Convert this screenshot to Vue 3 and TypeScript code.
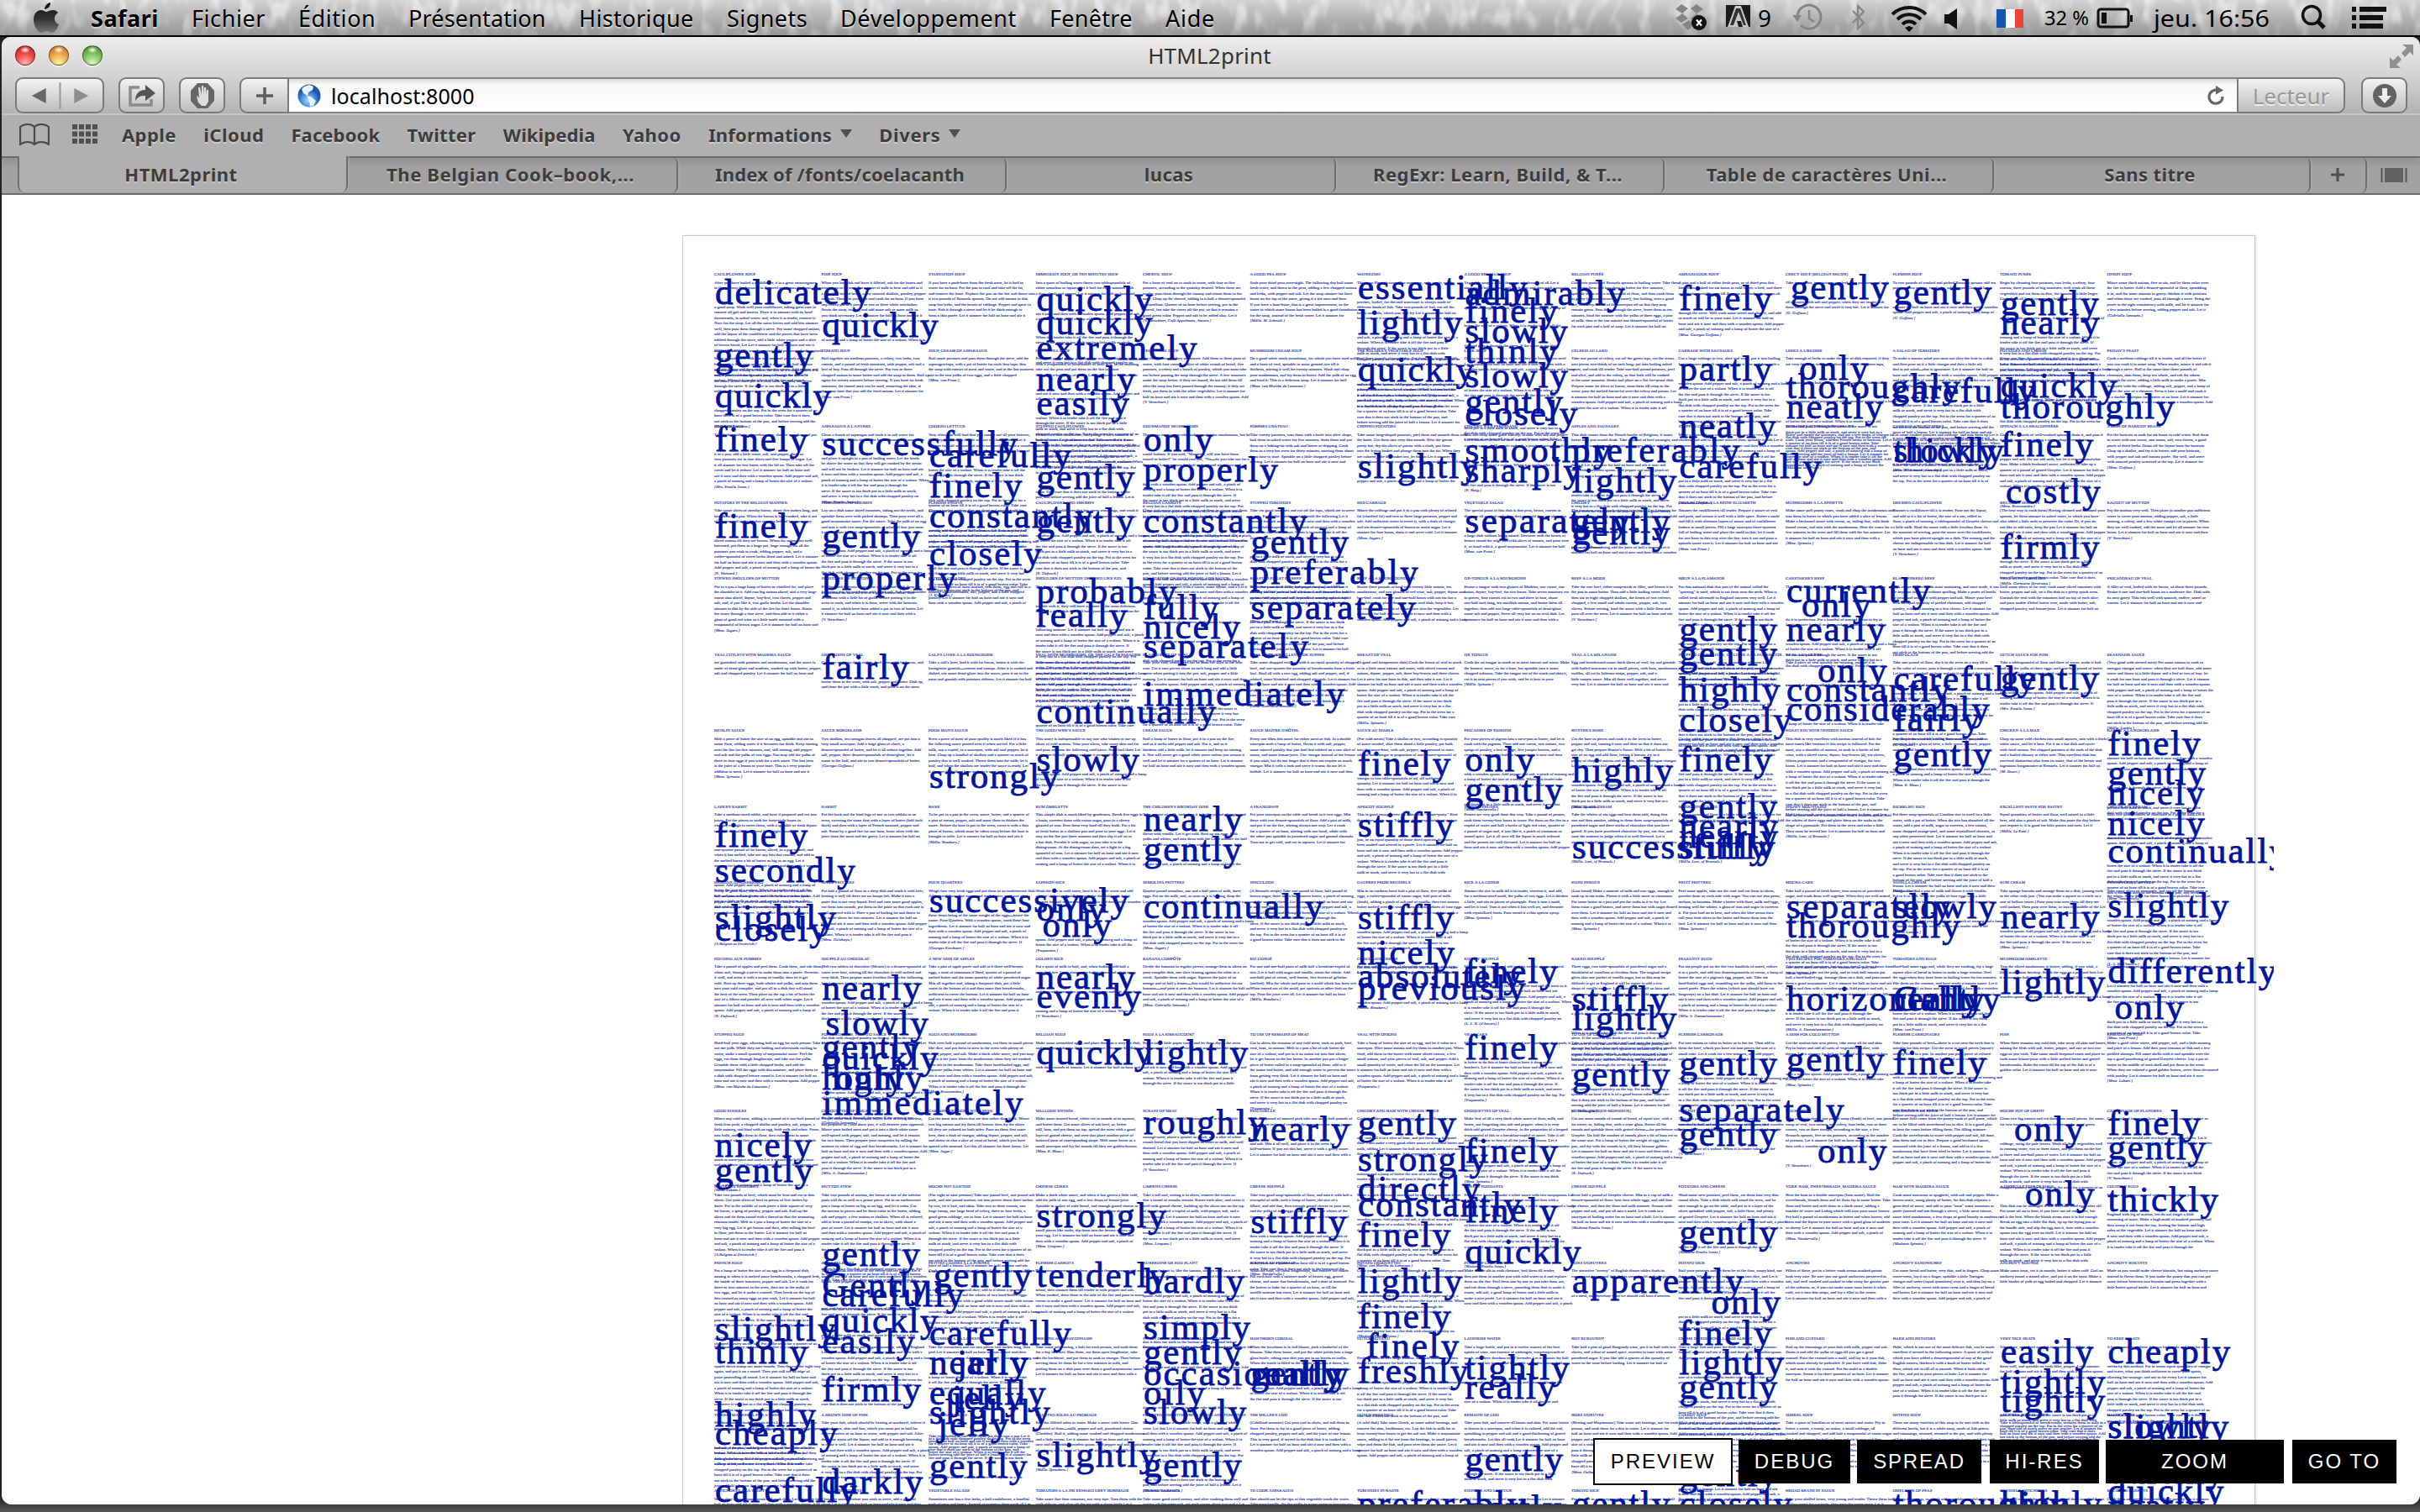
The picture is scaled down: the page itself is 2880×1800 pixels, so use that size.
<script setup lang="ts">
import type { Directive } from 'vue'

interface Adverb { word: string; x: number; y: number; track: number }
interface Line { text: string; gap: number; sign: boolean }
interface Recipe { title: string; lines: Line[] }

const PITCH_X = 127.5
const PITCH_Y = 90.5
const LEADING = 6.53

/* Spreads a label over a given width by adjusting its tracking. */
const vFit: Directive<HTMLElement, number> = {
  mounted(el, binding) {
    const n = (el.textContent ?? '').trim().length
    el.style.letterSpacing = `${(binding.value - el.offsetWidth) / n}px`
  },
}

/* Adverbs per column: word, baseline, optional indent. */
const adverbColumns: string[] = [
  'delicately 361,gently 436,quickly 484,finely 536,finely 639,finely 1007,secondly 1049,slightly 1105,closely 1119,nicely 1376,gently 1406,slightly 1595,thinly 1622,highly 1697,cheaply 1719,carefully 1787',
  'quickly 400,successfully 541,gently 651,properly 701,fairly 807,nearly 1189,slowly 1231 4,gently 1259,quickly 1272,highly 1296,only 1296 15,immediately 1326,gently 1506,Gently 1543,carefully 1554,quickly 1585,easily 1610,firmly 1667,darkly 1777',
  'carefully 555,finely 591,constantly 627,closely 672,strongly 937,successively 1085,gently 1531 5,carefully 1600,nearly 1635,jelly 1635 33,equally 1671,jelly 1677 27,slightly 1694,jelly 1708 10,gently 1758',
  'quickly 369,quickly 397,extremely 427,nearly 464,easily 493,gently 581,gently 633,probably 717,really 745,continually 860,slowly 917,only 1095,only 1114 7,nearly 1176,evenly 1199,quickly 1266,strongly 1460,tenderly 1531,slightly 1745',
  'only 536,properly 572,constantly 633,fully 736,nicely 759,separately 782,immediately 839,nearly 988,gently 1024,continually 1092,lightly 1266,roughly 1349,hardly 1538,simply 1593,gently 1623,occasionally 1648,oily 1671,slowly 1694,gently 1757',
  'gently 658,preferably 694,separately 736,nearly 1357,stiffly 1467,gently 1648,really 1648',
  'essentially 355,lightly 397,quickly 453,slightly 568,finely 922,stiffly 995,stiffly 1105,nicely 1147,absolutely 1175,previously 1189,gently 1350,strongly 1393,directly 1428,constantly 1447,finely 1483,lightly 1538,finely 1580,finely 1615 10,freshly 1645,preferably 1803',
  'admirably 362,finely 383,slowly 407,thinly 431,slowly 460,gently 491,closely 505,smoothly 549,sharply 573,separately 633,only 917,gently 953,finely 1169,finely 1260,finely 1383,finely 1454,quickly 1503,tightly 1641,really 1664,gently 1750,partly 1808 4',
  'preferably 549,lightly 585,gently 633,gently 647,highly 930,successfully 1021,stiffly 1202,lightly 1225,gently 1292,apparently 1538,gently 1803',
  'finely 368,partly 452,neatly 520,carefully 568,gently 762,gently 791,highly 834,closely 870,finely 917,gently 973,nearly 996,nearly 1008,stiffly 1021,gently 1279,separately 1334,gently 1363,gently 1480,only 1563 38,finely 1600,lightly 1635,gently 1664,gently 1768,closely 1803',
  'gently 355 5,only 451 15,thoroughly 473,neatly 497,currently 716,only 733 18,nearly 762,only 811 37,constantly 834,considerably 857,separately 1092,thoroughly 1115,horizontally 1202,gently 1274,only 1383 37',
  'gently 361,carefully 478,slowly 549,thickly 549,carefully 821,fairly 869,gently 911,slowly 1092,Gently 1202,really 1202,finely 1278,thoroughly 1803',
  'gently 374,nearly 397,quickly 472,thoroughly 497,finely 542,costly 598 6,firmly 664,gently 820,nearly 1104,lightly 1182,only 1357 16,only 1434 29,easily 1622,tightly 1658,tightly 1680,highly 1803',
  'finely 898,gently 933,nicely 957,nicely 993,continually 1026,slightly 1091,differently 1169,only 1212 8,finely 1350,gently 1379,thickly 1441,cheaply 1622,slightly 1711,slowly 1711,quickly 1765,quickly 1788,neatly 1806',
]

/* Tracking of the words that set wider or tighter than the rest. */
const tracking: Record<string, number> = {
  quickly: 1.5, slowly: 1.5, gently: 1.8, slightly: 2.1, preferably: 2.5, apparently: 2.5,
  separately: 2.4, immediately: 2.4, extremely: 2.4, strongly: 1.9,
}

const adverbs: Adverb[] = adverbColumns.flatMap((column, c) =>
  column.split(',').map((entry) => {
    const [word, y, indent] = entry.split(' ')
    return { word, x: 850 + c * PITCH_X + Number(indent ?? 0), y: Number(y), track: tracking[word] ?? 2 }
  }),
)

/* Recipes row by row: title | depth in lines | opening | contributor. */
const book = `
CAULIFLOWER SOUP|18|After you have boiled a cauliflower, it is a great extravagance to throw away the liquor; it is flavored and forms the basis of a good soup. Wash well your cauliflower, taking great care to remove all grit and insects. Place it to simmer with its head downwards, in salted water; and, when it is tender, remove it. Now for the soup. Let all the outer leaves and odd bits simmer well, then pass them through a sieve. Fry some chopped onions, add the liquor of the cauliflower and the pieces that have been rubbed through the sieve, add a little white pepper and a slice of brown bread. Let|
FISH SOUP|11|When you buy fish and have it filleted, ask for the bones and trimmings to be sent. Put a quart of milk to heat and add to it a bunch of mixed herbs, a few minced shallots, parsley, pepper and salt. Throw in your fish and cook for an hour. If you have any celery put in a piece, or two or three white artichokes. Strain the soup, taste it, and add more salt or more milk as you think necessary.|
STARVATION SOUP|6|If you have a pork-bone from the fresh meat, let it boil in water for an hour. Put the pan to cool and take off the fat, and remove the bone. Replace the pan on the fire and throw into it two pounds of Brussels sprouts. Do not add onions to this soup but leeks, and the hearts of cabbage. Pepper and spice to taste. Rub it through a sieve and let it be thick enough to form a thin purée.|
IMMEDIATE SOUP, OR TEN MINUTES SOUP|15|Into a quart of boiling water throw two tablespoonfuls of either semolina or tapioca; let it boil for eight minutes with a dust of salt and pepper.|
CHERVIL SOUP|7|Put a bone of veal on to cook in water, with four or five potatoes, according to the quantity desired. When these are tender, pass them through the tammy and return them to the soup. Chop up the chervil, adding to it half a dessert-spoonful of cornflour. Quarter of an hour before serving, put in the chervil, but take the cover off the pot, so that it remains a good green color. Pepper and salt to be added also.|[V. Verachtert, Café Appelmans, Anvers.]
A GOOD PEA SOUP|7|Soak your dried peas over-night. The following day boil some fresh water, and throw in the peas, adding a few chopped onions and leeks, with pepper and salt. Let the soup simmer for three hours on the top of the stove, giving it a stir now and then. If you have a ham-bone, that is a great improvement, or the water in which some bacon has been boiled is a good foundation for the soup, instead of the fresh water.|[Mdlle. M. Schmidt.]
WATERZOEI|23|This is an Flemish soup. One uses carp, eels, tench, roach, perches, barbel, for the real waterzoei is always made of different kinds of fish. Take two pounds of fish, cut off the heads and tails, which you will fry|
A GOOD BELGIAN SOUP|14|Vegetable soup is called the most wholesome of all|
BELGIAN PURÉE|8|Cook two pounds of Brussels sprouts in boiling water. Take them out, drain them and toss them in butter for five minutes, sprinkle them with a teaspoonful of flour, and then cook them in gravy (or meat extract and water), fast boiling, over a good fire, and keep the lid of the saucepan off so that they may remain green. Pass them through the sieve, leave them in ten minutes, bind the mixture with the yolks of three eggs, a pint of milk; then at the last minute one dessert-spoonful of butter for each pint and a half of soup.|
AMBASSADOR SOUP|10|A pint and a half of either fresh peas, or of dried peas that have been soaked for six hours in cold water; a leek, and three onions chopped. Simmer till the peas are tender, then pass all through the sieve. Well wash some sorrel and chop it, and add as much as will be to your taste.|[Mme. Georges Goffaux.]
CRECY SOUP (BELGIAN RECIPE)|6|Take ten carrots, two onions, one leek, five potatoes, and cook all in water, with salt and pepper; when they are tender, rub them through the sieve and serve it very hot.|[G. Goffaux.]
FLEMISH SOUP|7|To two pounds of washed and picked Brussels sprouts add ten potatoes, two onions, two leeks, salt, pepper. Cook all|[G. Goffaux.]
TOMATO PURÉE|23|Begin by cleaning four potatoes, two leeks, a celery, four carrots, three pounds of big tomatoes; well wash all these vegetables and cut them in dice, the tomatoes a little larger. Cook them all|
ONION SOUP|6|Mince some thick onions, five or six, and let them color over the fire in butter. Add a dessert-spoonful of flour, sprinkling it in, and the same amount in gravy; thicken it with potatoes and when these are cooked, pass all through a sieve. Bring the purée to the right consistency with milk, and let it simmer for a few minutes before serving, adding pepper and salt.|[Gabrielle Janssens.]
POTAGE LEMAN|13|Make a good stock with one and one-half pounds of skirt of beef, with a leek, two onions|[Gabrielle Janssens.]
TOMATO SOUP|7|Boil together six medium potatoes, a celery, two leeks, two carrots, and a pound of fresh tomatoes, with pepper, salt and a leaf of bay. Pass all through the sieve. Fry two or three chopped onions in some butter and add the soup to them. Boil up again for twenty minutes before serving. If you have no fresh tomatoes, the tinned ones can be used, removing the skin, at the same time that you add the fried onions.|[Mme. van Praet.]
SOUP, CREAM OF ASPARAGUS|4|Boil some potatoes and pass them through the sieve, add the asparagus-tops, with a pat of butter for each four tops; thin the soup with extract of meat and water, and at the last moment stir in the raw yolks of two eggs, and a little chopped parsley.|[Mme. van Praet.]
GREEN PEA SOUP|20|Put half a pound of dry green peas to soak overnight in water, with a teaspoonful of bicarbonate of soda in it. In the morning take out the peas and put them on the fire in about three-and-a-half pints of water.|
VEGETABLE SOUP|8|Fry four onions till they are brown. Add them to three pints of water, with four carrots, a slice of white crumb of bread, five potatoes, a celery and a bunch of parsley, which you must take out before passing the soup through the sieve. A few tomatoes make the soup better; if they are tinned, do not add them till after the soup has been passed through the tammy; if they are fresh, put them in with the other vegetables.|[V. Verachtert.]
MUSHROOM CREAM SOUP|5|On a good white stock foundation, for which you have used milk and a bone of veal, sprinkle in some ground rice till it thickens, stirring it well for twenty minutes. Wash and chop your mushrooms, and fry them in butter. Add the yolk of an egg and bind it. This is a delicious soup.|[Mme. van Marcke de Lunessen.]
THE SOLDIER'S VEGETABLE SOUP|12|Peel three pounds of vegetables. Put them in a large pot with all the|
LEEK SOUP|15|Cut up two onions and fry them till they are brown; you need|
CELERIS AU LARD|9|Take one pound of celery, cut off the green tops, cut the stems into pieces two-thirds of an inch long; put into boiling salted water, and cook till tender. Take one-half pound potatoes, peel and slice, and add to the celery, so that both will be cooked at the same moment. Strain and place on a flat fire-proof dish. Prepare some fat slices of bacon, toast them till crisp in the oven; pour the melted bacon-fat over the celery and potato.|
CABBAGE WITH SAUSAGES|14|Cut a large cabbage in two, slice and wash, put it into boiling|
LEEKS À LIEGOISE|20|Take enough of leeks to make the size of dish required; if they are very thick cut in two lengthwise. Cut off the green tops,|
A SALAD OF TOMATOES|22|To make a tomato salad you must not slice the fruit in a dish and then pour on it a little vinegar and then a little oil; that is not salad—that is ignorance.|
POTATOES AND CHEESE|12|Every one likes this nourishing dish, and it is a cheap one.|
FRIDAY'S FEAST|8|Cook a medium cabbage till it is tender, and all the better if you can cook it in some soup. When tender, mince it and rub it through a sieve. Boil at the same time three pounds of chestnuts, skin them, keep ten whole, and rub the others through the sieve, adding a little milk to make a purée. Mix the purée with the cabbage, adding salt, pepper, and a lump of butter the size of a chestnut. Press it into a mold and cook it in a double saucepan for quarter of an hour.|
RED CABBAGE|10|Take half a cabbage of medium size, chop it very fine and put it in a pan; add a little water, salt, and pepper, three or four potatoes cut in fine slices and five lumps of sugar. Let it all simmer for two hours with the lid on. Then take off the cover and let it reduce.|[Mrs. Emelie Jones.]
ASPARAGUS À L'ANVERS|12|Clean a bunch of asparagus and cook it in salt water for fifteen minutes. To do this tie the bunch round with some tape and place it upright in a pan of boiling water. Let the heads be above the water so that they will get cooked by the steam and will not be broken.|[Mme. Emelie Jones.]
COOKED LETTUCE|21|Very often you will find that you cannot use all your lettuces, that they have begun to bolt and are too hard. This is|
STUFFED CAULIFLOWER|12|Pick over a fine cauliflower, and plunge it for a moment in boiling water.|
GOURMANDS' MUSHROOMS|20|There was once a man who had a passion for mushrooms, but he could fashion. If you said, "Monsieur, will you have them tossed in butter?" he would roar out, "No—do you take me for a Prussian?|
POMMES CHÂTEAU|5|Take twenty potatoes, turn them with a knife into olive shape, boil them in salted water for five minutes; drain them and put them on a baking-tin with salt and butter or dripping. Cook them in a very hot oven for thirty minutes, moving them about from time to time. Sprinkle on a little chopped parsley before serving.|
CHIPPED POTATOES|9|Take some long-shaped potatoes, peel them and smooth them with the knife. Cut them into very thin rounds. Heat the grease pretty hot, dry the slices of potato with a cloth, put them into the frying basket and plunge them into the fat. When they are colored, take the basket out, let the fat|
CHICORY À LA FERDINAND|10|Boil and chop some good chicory; season with salt and pepper|[E. Haig.]
APPLES AND SAUSAGES|22|This dish comes from the French border of Belgium; it tastes better than you would think. Take a pound of beef sausages, and preferably use the small chipolata sausages. (What a delightful thing if|
STUFFED CHICORY|13|Make a mince of any cold white meat, such as veal, pork or chicken, and add to it some minced ham; sprinkle it with|[Madame Limpens.]
TOMATOES STUFFED WITH BEANS|6|Halve and empty the tomatoes, and put a few drops of vinegar in each. Cook your beans, whether French beans or haricots.|[Madame van Praet.]
CABBAGE AND POTATOES|7|Cut some cooked potatoes and cabbage, and mix them up|[Mlle. M. Schmidt, Antwerp.]
SPINACH À LA BRACONNIÈRE|13|Cook two pounds of well-washed spinach; drain it, and pass it through a sieve; or, failing a sieve, chop it very butter, pepper and salt. Do not add milk, but let it remain somewhat firm. Make a thick bechamel sauce, sufficient to take up a quarter of a pound of grated Gruyère.|[Mme. Braconnière.]
A DISH OF HARICOT BEANS|6|Put the haricots to soak for six hours in cold water. Boil them in water with one carrot, one onion, salt, two cloves, a good pinch of dried herbs. Drain off the liquor from the haricots. Chop up a shallot, and fry it in butter; add your haricots, with pepper and salt and tomato purée. Stir well, and serve with minced parsley scattered at the top.|[Mme. Goffaux.]
POTATOES IN THE BELGIAN MANNER|12|Take some slices of streaky bacon, about five inches long, and heat them in a pan. When the bacon is half-cooked, take it out of the pan and in the fat that remains behind fry some very sliced onions till they are brown. When the onions are well browned, put them in a large pot, large enough for all the potatoes you wish to cook, adding pepper, salt, and a coffee-spoonful of sweet herbs dried and mixed.|[E. Wainard.]
TOMATOES AND SHRIMPS|15|Lay on a dish some sliced tomatoes, taking out the seeds, and sprinkle them over with picked shrimps. Then pour over all a good mayonnaise sauce. For the sauce: Take the yolk of an egg and mix it with two soup-spoonfuls of salad oil that you must|
FLEMISH ENDIVE|16|Choose twelve endives that are short and neat; cut off the outside leaves and pare the bottom; wash them in plenty of water|[J. Kirckaert.]
CAULIFLOWER AND SHRIMPS|12|Pick a good cauliflower that has green trimmings, and wash it|[E. Defouck.]
BELGIAN CARROTS|14|Clean and scrape your carrots and cut them in pieces; put them in a pan with butter|
STUFFED TOMATOES|20|Take ten good tomatoes and cut off the tops, which are to serve as lids. Empty the insides, and fill with the following|[Mme. van Praet.]
RED CABBAGE|5|Mince the cabbage and put it in a pan with plenty of refined fat (clarified fat) and two or three large potatoes, pepper and salt. Add sufficient water to cover it, with a dash of vinegar and six dessert-spoonfuls of brown or moist sugar. Let it simmer for four hours, drain it and serve cold.|[Mme. Segers.]
VEGETABLE SALAD|8|The special point of this dish is that peas, beans, carrots in dice, are all cooked and when they are cold they are placed in a large dish without being mixed. Decorate with the hearts of lettuce round the edge and with slices of tomato, and pour over it, or hand with it, a good mayonnaise.|[Mme. van Praet.]
CHICORY|7|The common way to cook chicory is to boil it|[Mme. van Praet.]
CAULIFLOWER À LA REINE ELIZABETH|7|Simmer the cauliflowers till tender. Prepare a mince of veal and pork, and season it well with a little spice. Butter a mold and fill it with alternate layers of mince and of cauliflower broken in small pieces. Fill a large saucepan three-quarters full of boiling water and place the mold in this; let it cook for one hour in this way over the fire; turn it out and pour a spinach sauce over it.|[Mme. van Praet.]
MUSHROOMS À LA SPINETTE|6|Make some puff pastry cases, wash and chop the mushrooms and toss them in butter to which you have added a slice of lemon. Make a bechamel sauce with cream, or, failing that, with thick tinned cream, and mix with the mushrooms. Heat the cases for a few minutes in the oven and fill them with the hot mixture.|[Mme. Spinette.]
DRESSED CAULIFLOWER|8|Simmer a cauliflower till it is tender. Pour out the liquor, and add to it a bit of butter, the size of a nut, rolled in flour, a pinch of nutmeg, a tablespoonful of Gruyère cheese and a little milk. Bind the sauce with a little feculina flour. At the moment of serving, pour the sauce over the cauliflower, which you have placed upright on a dish. The nutmeg and the cheese are indispensable to this dish.|[V. Verachtert.]
BRUSSELS SPROUTS|13|(The best way to cook them) Having cleaned and trimmed your sprouts, let them simmer in salted water, to which you have also added a little soda to preserve the color. Or, if you do not like to add soda, keep the pan|[Mdlle. Germaine Verstraete.]
RAGOUT OF MUTTON|5|Fry the mutton very well. Then place in another pan sufficient water to cover your mutton, adding pepper, salt, a little nutmeg, a celery, and a few white turnips cut in pieces. When they are well cooked, add the meat and let all simmer for two hours.|[V. Verachtert.]
STEWED SHOULDER OF MUTTON|8|Put in a pan a large lump of butter or clarified fat, and place the shoulder in it. Add two big onions sliced, and a very large carrot also sliced, thyme, bay-leaf, two cloves, pepper and salt, and, if you like it, two garlic knobs. Let the shoulder simmer in this by the side of the fire for three hours. Strain the sauce through a fine sieve, and then add to it either a glass of good red wine or a little made mustard with a teaspoonful of brown sugar.|[Mme. Segers.]
SHOULDER OF MUTTON|6|Put the dried haricots to soak for a night, and cook them the following day for two hours with some salt. Rub your shoulder of mutton with a little bit of garlic before putting it in the oven to cook, and when it is done, serve with the haricots round it, to which have been added a pat or two of butter.|[V. Verachtert.]
MUTTON COLLOPS|3|Take some slices of roast mutton, trim them, egg and roll in a mixture of breadcrumbs, salt, pepper, and a little chopped parsley.|
SHOULDER OF MUTTON DRESSED LIKE KID|26|The flavor of kid dressed as here. Let them therefore take trouble with it, they will have a dinner of the most delicious. Put into a deep dish that will hold your shoulder of mutton the following mixture:|
ROAST RUMP OF BEEF, BORDELAISE SAUCE|14|Braise the rump of beef with a carrot, some thyme, and a|
ROASTED FILLET OF BEEF|13|Take four pounds of fillet, and pepper and salt it well|[Mme. van Praet.]
BEEF À LA BOURGUIGNONNE|6|Braise three pounds of beef with twenty little onions, ten mushrooms, and two glasses of red wine, salt, pepper, thyme and bay-leaf; cook for one and one-half hours with not too hot a fire. After that, place the meat on an oval dish; keep it hot; cut two tablespoonfuls of demi-glaze into the vegetables.|
OX-TONGUE À LA BOURGEOISE|6|Braise a tongue with two glasses of Madeira, one carrot, one onion, thyme, bay-leaf, for two hours. Take seven tomatoes cut in pieces, four carrots cut in two and three in four, about one-half inch long, ten smallish onions, and braise them all together; then add two large table-spoonfuls of demi-glaze, some salt and pepper. Serve all very hot on an oval dish.|
BEEF À LA MODE|6|Take the raw beef, either rump-steak or fillet, and brown it in the pan in some butter. Then add a little boiling water. Add then six or eight chopped shallots, the hearts of two celeries chopped, a few small and whole carrots, pepper, salt, two cloves. Before serving, bind the sauce with a little flour and pour all over the meat.|[V. Verachtert.]
BŒUF À LA FLAMANDE|21|For this national dish that part of the animal called the "spiering" is used, which is cut from near the neck. What is called fresh silverside in England answers very well.|
CARETAKER'S BEEF|20|This nourishing dish is of the Maître de la Cie, held that can do it to perfection. Put a handful of minced onion to fry in|
BLANKENBERG BEEF|12|This recipe makes a dish most sustaining, and once made, it can be kept hot for hours without spoiling. Make a purée of lentils or peas, and season it with pepper and salt. Mince your beef with an equal quantity of peeled chestnuts, add chopped parsley, a dust of nutmeg or a few cloves.|
VEAL WITH TOMATOES|4|Grill some slices of fat veal; cook some sliced tomatoes with butter, pepper and salt, on a flat dish in a pretty quick oven. Garnish the veal with the tomatoes laid on top of each slice, and pour maître d'hôtel butter over, made with butter, salt, chopped parsley, and lemon-juice.|
FRICANDEAU OF VEAL|3|A fillet of veal, larded with fat bacon, of about three pounds. Braise it one and one-half hours on a moderate fire. Dish with its own gravy. This eats well with spinach, endive, sorrel or carrots.|
VEAL CUTLETS WITH MADEIRA SAUCE|2|are garnished with potatoes and mushrooms, and the sauce is made of demi-glaze and madeira, worked up with butter, pepper, salt and chopped parsley.|
GRENADINS OF VEAL|5|Cut your veal into thick cutlets, lard them with fat bacon, and braise them in the oven, with salt, pepper and butter. Dish up, and rinse the pot with a little stock, and pour it on the meat ready to serve.|
CALF'S LIVER À LA BOURGEOISE|3|Take a calf's liver, lard it with fat bacon, braise it with the bourgeoise garnish—carrots and turnips. After it is cooked and dished, stir some demi-glaze into the sauce, pour it on to the meat and garnish with potatoes château.|
VEAL WITH MUSHROOMS, OR THE CALF IN PARADISE|7|Take some slices of loin of veal, fry them in butter, with|
BLANQUETTE OF VEAL|11|Take your veal, which need not be from the fillet or the best cuts. Cut it into pieces about an inch long and add a little water when putting it into the pot; salt, pepper and a little nutmeg.|
VEAL CAKE, EXCELLENT FOR SUPPER|8|Take some chopped veal and with it an equal quantity of chopped beef, and one-quarter the quantity of breadcrumbs from a fresh loaf. Bind all with a raw egg, adding salt and pepper, and, if wished, some blanched and chopped almonds.|[Mme. Gabrielle Janssens.]
BREAST OF VEAL|11|(A good and inexpensive dish) Cook the breast of veal in stock or in a little meat extract and water, with sliced carrots and onions, thyme, pepper, salt, three bay-leaves and three cloves. Let it stew for one hour in this, and then take it out.|[Mdlle. Spinette.]
OX TONGUE|4|Cook the ox tongue in stock or in meat extract and water. Make the hunters' sauce, as for a hare, but sprinkle into it some chopped sultanas. Take the tongue out of the stock and skin it, cut it in neat pieces if you wish, and let it heat in your sauce.|[Mdlle. Spinette.]
VEAL À LA MILANAISE|4|Egg and breadcrumb some thick slices of veal; fry and garnish with boiled macaroni cut in small pieces, with ham, mushrooms, truffles, all cut in Julienne strips, pepper, salt, and a little tomato sauce. Mix all these well together, and serve very hot.|
STUFFED CALF'S LIVER, OR LIVER À LA PANIER D'OR|18|Take the liver of a calf, using a good pint of warm|
VEAL À LA CRÈME|11|Take a piece of veal suitable for roasting, and put it in vinegar|
DEMI-GLAZE|15|Take one pound of flour, dry it in the oven on a tray till it is the color of cocoa; pass it through a sieve into a saucepan,|[G. Goffaux.]
DUTCH SAUCE FOR FISH|9|Take a tablespoonful of flour and three of water; make it boil and add the yolks of three eggs; melt one-half pound of butter and beat it|[Mrs. Emelie Jones.]
BEARNAISE SAUCE|12|(Very good with stewed meat) Put some onions to cook in tarragon vinegar and water; when they are half done, add more water and throw in a little thyme and a leaf or two of bay; let it cook for one hour and pass it through a sieve.|[Mdlle. Leonie.]
MUSLIN SAUCE|7|Melt a piece of butter the size of an egg, sprinkle and stir in some flour, adding water if it becomes too thick. Keep stirring over the fire for five minutes, and, still stirring, add pepper and salt and the yolks of two eggs. You may add the yolks of three or four eggs if you wish for a rich sauce. The last item is the juice of a lemon to your taste. This is a very popular addition to meat.|[Mme. Spinette.]
SAUCE BORDELAISE|5|Two shallots, ten tarragon leaves all chopped, are put into a very small saucepan. Add a large glass of claret, a dessert-spoonful of butter, and let it all reduce together. Add salt, pepper, three dessert-spoonfuls of demi-glaze, let it come to the boil, and stir in two dessert-spoonfuls of butter.|[Georges Goffaux.]
POOR MAN'S SAUCE|9|Even a piece of meat of poor quality is much liked if it has the following sauce poured over it when served. Put a little milk, say a cupful, in a saucepan, with salt and pepper; let it heat. Chop up a handful of shallots and a quarter as much of parsley that is well washed. Throw them into the milk; let it boil, and when the shallots are tender the sauce is ready.|
THE GOOD WIFE'S SAUCE|9|This sauce is indispensable to any one who wishes to use up slices of cold mutton. Trim your slices, take away skin and fat and pour on them the following cold sauce. Hard boil three|
CREAM SAUCE|5|Roll a lump of butter in flour, put it in a pan on the fire, and as it melts add pepper and salt. Stir it, and as it thickens add a little milk; let it simmer and keep on stirring it. You will never get a good white sauce unless you season it well and let it simmer for a quarter of an hour.|
SAUCE MAÎTRE D'HÔTEL|6|Every one likes this sauce for either meat or fish. In a double saucepan melt a lump of butter, flavor it with salt, pepper, some minced parsley that you had first rubbed on a raw slice of onion, and some lemon-juice. Use vinegar instead of the lemon if you wish, but do not forget that it does not require so much vinegar. Mix it with a fork and serve it warm; do not let it bubble.|
SAUCE AU DIABLE|10|(For cold meats) Take a shallot or two, according to quantity of sauce needed, slice them shred a little parsley, put both into the sauce-boat, with salt, pepper, and mustard to taste; add oil and vinegar in proportion of one dessert-spoonful of vinegar to two table-spoonfuls of oil, till sufficient quantity.|
FRICASSEE OF PIGEONS|13|Put your pieces of pigeon into a stew-pan in butter, and let it cook with the pigeons. Then add one carrot, two onions, two sprigs of parsley, a leaf of sage, five juniper berries, and a very|[Mme. Vandervalle.]
HUNTER'S HARE|13|Cut the hare in pieces and cook it in the oven in butter, pepper and salt, turning it now and then so that it does not get dry. Then prepare Hunter's Sauce. Melt a bit of butter the size of an egg and add flour, letting it brown; fry in it plenty of chopped onions and shallots, adding tarragon vinegar.|[Mme. Spinette.]
FLEMISH RABBIT|22|Cut the rabbit into neat pieces. Put them in a deep|[Mdlle. Lust, of Brussels.]
ROAST KID WITH VENISON SAUCE|14|This dish is very excellent with mutton instead of kid; the meat tastes like venison if this recipe is followed: Put the meat, say a shoulder of mutton, to soak in a bottle of red wine, with a sliced carrot, thyme, bay-leaves (4), six cloves, fifteen peppercorns and a teaspoonful of vinegar, for two hours.|
BAKED RABBIT|9|Fry the pieces of rabbit, adding three onions, ten medium potatoes, half a glass of beer, a little water or stock, pepper and salt, and let all cook|[Mme. E. Maes.]
CHICKEN À LA MAX|6|Chop up some cold chicken into small squares, mix with a thick white sauce, and let it heat. Put it on a hot dish and cover with fried onions. Put chipped potatoes at the ends of the dish and a boiled chicory at either side. This excellent dish has received distinction also from its name, that of the heroic and ingenious burgomaster of Brussels.|[M. Stuart.]
RABBIT À LA BORDELAISE|18|Cut a rabbit into six and cover with vinegar; chop|
LAEKEN RABBIT|17|Take a medium-sized rabbit, and have it prepared and cut into joints. Put the pieces to soak for forty-eight hours in vinegar, enough to cover them, with a sprinkle of fresh thyme in it and a small onion sliced forty-eight hours, put one-quarter pound of fat bacon, sliced, in a pan to melt, and when it has melted, take out any bits that remain, and add to the melted bacon a bit of butter as big as an egg.|
RABBIT|4|Put the back and the hind legs of one or two rabbits in an oven, covering the same first with a layer of butter (half inch thick) and then with a layer of French mustard, pepper and salt. Roast by a good fire for one hour, baste often with the juice from the meat and the gravy.|
HARE|5|To be put in a pan in the oven; sauce, butter, and a quarter of a pint of cream, pepper, salt and some flour to thicken the sauce. Before the hare is put in the oven, cover it with a thin piece of bacon, which must be taken away before the hare is brought to table.|[Mdlle. Breukers.]
RUM OMELETTE|9|This simple dish is much liked by gentlemen. Break five eggs in a basin, sweeten them with castor sugar, pour in a sherry glassful of rum. Beat them very hard till they froth. Put a bit of fresh butter in a shallow pan and pour in your eggs. Let it stay on the fire just three minutes and then slip it off on to a hot dish. Powder it with sugar, as you take it to the dining-room. At the dining-room door, set a light to a big spoonful of rum.|
THE CHILDREN'S BIRTHDAY DISH|9|Take a quart of milk, and when it is half a pound of sugar, and flavor with vanilla. Let it get cold. Beat up six eggs, both yolks and whites, and mix them with the|
A FRANGIPANI|5|Put your saucepan on the table and break in it two eggs. Mix these with two dessert-spoonfuls of flour. Add a pint of milk, and put it on the fire, stirring always one way. Let it cook for a quarter of an hour, stirring with one hand, while with the other you sprinkle in powdered sugar and ground almonds. Turn out to get cold, and cut in squares.|
APRICOT SOUFFLÉ|11|This is good enough even for a birthday "dinner-party." Beat the whites of six eggs Take four dessert-spoonfuls of apricot jam, or an equal quantity of those dried apricots that have been soaked and stewed to a purée.|
STEWED PRUNES|6|Prunes are very good done this way. Take a pound of prunes, soak them twenty-four hours in water. Put them on the fire in a cupful of water and half a bottle of light red wine, quarter of a pound of sugar and, if you like it, a pinch of cinnamon or mixed spice. Let it all stew till the liquor is much reduced and the prunes are well flavored.|
CHOCOLATE CREAM|9|Take the whites of six eggs and beat them stiff, doing first one and then another, adding to them three soup-spoonfuls of powdered sugar and three sticks of chocolate that you have grated. If you have powdered chocolate by you, use that, and taste the mixture to judge when it is well flavored.|[Mdlle. Lust, of Brussels.]
MADELEINE CAKES|8|Put two pounds of flour in a basin with a bit|[Mdlle. Lust, of Brussels.]
SNOWY MOUNTAINS|4|Mold into rounds castor sugar and mix; put in them, and beat the whites of three eggs and place them on the rusks in the shape of a pyramide. Put them in the oven and color a little. They must be served hot.|[Mdlle. Lust, of Brussels.]
RICHELIEU RICE|14|Put three soup-spoonfuls of Carolina rice to swell in a little water, with a pat of butter. When the rice has absorbed all the water, add a pint of milk, sugar to sweeten, a few raisins, some chopped orange-peel, and some crystallized cherries, or any other preserved fruit.|[Mdlle. Lust.]
EXCELLENT PASTE FOR PASTRY|3|Equal quantities of butter and flour, well mixed in a little beer, add also a pinch of salt. Make this paste the day before you require it; it is good for little patties and tarts.|[Mdlle. Le Kent.]
CHOCOLATE CREAM|15|Melt five penny tablets of chocolate in a pint of milk|[Mme. Vandervalle.]
BELGIAN GINGERBREAD|10|A cup of good flour, six ounces of lard or|[A Belgian at Droitwich.]
APPLE FRITTERS|9|Put half a pound of flour in a deep dish and work it with beer, beating it well till there are no lumps left. Make it into a paste that is not very liquid. Peel and core some good apples, cut them into rounds, put them in the paste so that each one is well covered with it. Have a pan of boiling fat and throw in the apple slices for two minutes.|[Mme. Delahaye.]
FOUR QUARTERS|11|Weigh four very fresh eggs and put them in an earthenware dish. Add sieved flour, fine sugar, and fresh butter, each one of these items being of the same weight of the eggs—hence the name: Four Quarters. With a wooden spoon, work these four ingredients.|[Georges Kerckaert.]
SAFFRON RICE|11|Wash the rice in cold water, heat it in a little water and add a bit of saffron and milk (enough for the dish) with|[Paquerette.]
SEMOLINA FRITTERS|11|Quarter pound semolina, one and a half pints of milk, three eggs. Put on the milk, and, as soon as it is boiling, drop the|[Mme. Segers.]
SPECULOOS|9|(A Brussels recipe) Take one pound of flour, half pound of brown sugar, three and a half ounces butter, a pinch of nutmeg, and the same of cloves.|
GAUFRES FROM BRUSSELS|15|Mix in an earthern bowl half a pint of flour, five yolks of eggs, a coffee-spoonful of castor sugar, half pint of milk (fresh), adding a pinch of salt and of vanilla; then two ounces butter melted over hot water. Then beat the whites of four eggs|
RICE À LA CONDE|5|Simmer the rice in milk till it is tender, sweeten it, and add, for a medium-sized mold, the yolks of two eggs. Let it thicken a little, and stir in pieces of pineapple. Pour it into a mold, and let it cool. Turn it out when it has well set, and decorate with crystallized fruits. Pour round it a thin apricot syrup.|[Mme. Spinette.]
PAINS PERDUS|7|(Lost bread) Make a mixture of milk and raw eggs, enough to soak up in six rusks. Flavor it with a little mace or cinnamon. Put some butter in a pan and put the rusks in it to fry. Let them color a good brown, and serve them hot with sugar dusted over them.|[Mme. Spinette.]
FRUIT FRITTERS|7|Peel some apples, take out the core and cut them in slices, powder them on each side with sugar. You can use also pears, melons, or bananas. Make a batter with flour, milk and eggs, beating well the whites; a glass of rum and sugar to sweeten it. Put your lard on to heat, and when the blue steam rises roll your fruit slices in the batter and throw them into the lard.|[Mme. Spinette.]
MOCHA CAKE|15|Take half a pound of fresh butter, four ounces of powdered sugar, and work them well together. When they are well mixed,|[Mme. Spinette.]
VANILLA CREAM|8|Bring to the boil a pint of milk and flavor it with vanilla. Put to it to boil. Whip the yolks of four eggs with a little|[Mdlle. Lenelle.]
RUM CREAM|10|Take sponge biscuits and arrange them on a dish, joining each to the other with jam. (You can make a square or a circle or a sort of hollow tower.) Pour your rum over them till they are well soaked. Then pour over them, or into the middle of the|[Mme. Spinette.]
PINEAPPLE À L'ANVERS|13|Take some slices of pineapple, and cut off the brown spots at the edges. Steep them for three hours in a plateful of weak|[L. L. B. d'Anvers.]
POUDING AUX POMMES|9|Take a pound of apples and peel them. Cook them, and rub them, when soft, through a sieve to make them into a purée. Sweeten it well, and scent it with a scrap of vanilla; then let it get cold. Beat up three eggs, both whites and yolks, and mix them into your cold compôte, and put all in a dish that will stand the heat of the oven. Then place on the top a bit of butter the size of a filbert and powder all over with white sugar.|[E. Defouck.]
SOUFFLÉ AU CHOCOLAT|21|Melt two tablets of chocolate (Menier) in a dessert-spoonful of water over heat, stirring till the chocolate is well melted and very thick. Then prepare some feculina flour in the following|
A NEW DISH OF APPLES|8|Take a pint of apple purée and add to it three well-beaten eggs, a taste of cinnamon if liked, quarter of a pound of melted butter and the same quantity of white powdered sugar. Mix all together and, taking a fireproof dish, put a little water in the bottom of it and then some fine breadcrumbs, sufficient to cover the bottom.|
GOLDEN RICE|9|Put a quart of milk to boil, and, when boiling, add half a pound of rice.|[V. Verachtert.]
BANANA COMPÔTE|7|Divide the bananas in regular pieces; arrange them in slices on your compôte dish, one slice leaning against the other in a circle. Sprinkle them with sugar. Squeeze the juice of an orange and of half a lemon—this would be sufficient for six bananas—and pour it over the bananas.|[Mme. Gabrielle Janssens.]
RIZ CONDÉ|6|For one and one-half pints of milk half a breakfast-cupful of rice. Let it boil with sugar and vanilla; strain the whole. Add one-half pint of cream, well beaten, five leaves of gelatine (melted). Mix the whole and pour in a mold which has been wet. When turned out of the mold, put apricots or other fruit on the top. Pour the juice over all.|[Mdlle. Breukers.]
CHOCOLATE CREAM|8|For one and a half pints of chocolate cream, milk, four eggs|[Mdlle. Breukers.]
KIDNEY SOUFFLÉ|11|Mince a veal kidney, and add to it its weight of minced veal. Make a brown sauce of flour and butter and add the meat to it. Let it cool a little.|[L. L. B. (d'Anvers).]
BAKED SOUFFLÉ|17|Three eggs, two table-spoonfuls of powdered sugar and a thimbleful of cornflour or feculina flour. The original recipe gives also one packet of vanilla sugar, but as this may be difficult to get in England it will be easier to add a few drops of vanilla essence.|
PEASANTS' EGGS|9|For six people put on the fire two handfuls of sorrel, reduce it to a purée, and add two dessertspoonfuls of cream, a lump of butter the size of a pigeon's egg, pepper, salt. Take six hard-boiled eggs and, crumbling out the yolks, add them to the sorrel purée. Place the whites (which you should have cut longways) on a hot dish.|[Mlle. A. Demeulemeester.]
TWO RECIPES FOR TOMATOES AND EGGS|12|Take some good tomatoes, but not too ripe. Cut them down from top to bottom, take out the pulp, and in each half tomato put half a hard-boiled egg. Arrange them on a dish, and pour round them a good mayonnaise.|[Mdlle. A. Demeulemeester.]
TOMATOES AND EGGS|12|Hard-boil some eggs and, while they are cooking, fry a large square slice of bread in butter to make a large crouton. Peel the eggs when they have been in boiling water for ten minutes. Pile them on the crouton, and have ready a tomato sauce.|[Mme. van Praet.]
MUSHROOM OMELETTE|6|Toss the sliced mushrooms in butter, adding, if you wish, a little mushroom ketchup. Break the eggs in a pan and beat|
ASPARAGUS OMELETTE|13|Cook the asparagus-tops in salt and water and drain them. Roll|[Mme. van Praet.]
STUFFED EGGS|8|Hard-boil your eggs, allowing half an egg for each person. Take out the yolk. While they are boiling and afterwards cooling in water, make a small quantity of mayonnaise sauce. Peel the eggs, cut them through lengthways, and take out the yolks. Crumble these with a little chopped herbs, and add the mayonnaise. Fill the eggs with this mixture, and place them in a dish with chopped lettuce round it.|[Mme. van Marcke de Lunessen.]
POACHED EGGS, TOMATO SAUCE|15|Make your tomato sauce. Break the eggs into boiling water|[Gabrielle Janssens.]
EGGS AND MUSHROOMS|9|Pick over half a pound of mushrooms, cut them in small pieces like dice, and put them to stew in the oven with plenty of butter, pepper, and salt. Make a thick white sauce, and you may add to it the juice from the mushrooms when they are cooked; then stir in the mushrooms. Take three hard-boiled eggs, and separate yolks from whites.|[Mme. Braconnière.]
BELGIAN EGGS|5|Make some scrambled eggs, and place them on a very hot dish, and pour round them a thick tomato sauce. Decorate the dish with thick rounds of tomato.|
EGGS À LA RIBEAUCOURT|8|Butter some little paper cases, and let them dry in the oven. Put a morsel of butter in each|
TO USE UP REMAINS OF MEAT|12|Cut in slices the remains of any cold meat, such as pork, beef, veal, ham, or mutton. Melt in a pan a bit of salt butter the size of a walnut, and put in it an onion cut into fine slices; let it get brown in the hot butter. In another pan put a larger piece of butter rolled in a soup-spoonful of flour; add to it the onion and butter, and add enough water to prevent the sauce from getting very thick.|[Paquerette.]
VEAL WITH ONIONS|8|Take a lump of butter the size of an egg, and let it color in a saucepan. Slice some onions and fry them in another pan. When fried, add them to the butter with some sliced carrots, a few small onions, and your pieces of veal, salt, and pepper. Add a small quantity of water, and close the lid on the saucepan.|[Paquerette.]
VEAL CAKE|11|Mince very pounds of raw veal and one-fourth pound of pork; it is better to do this at home than to have it done at the butcher's.|[Paquerette.]
TO USE UP COLD MEAT|13|Take a fresh cabbage, scald it well and open the leaves|[L. Verhaeghe.]
FLEMISH CARBONADE|16|Put two onions to color in butter or in hot fat. Then add to them the beef, which you have cut into pieces the size of a small cake. Let it cook for a few minutes, and add pepper, salt,|
A DISH FOR COLD MUTTON|8|Cut the mutton into neat pieces, take away all fat and skin. Fry in butter and add all sorts of vegetables in dice, with thyme,|[Mme. Spinette.]
FLEMISH CARBONADES|13|Take four pounds of beef—there is a cut near the neck that is suitable for this recipe. Cut the meat in small pieces (square) and fry them in a pan. In another pan put a piece of refined fat|
FISH|5|When there remains any cold fish, take away all skin and bones, mixing the flesh with salt, butter, pepper, and one or two raw eggs as you wish. Take some small fireproof cases and place in each some lemon-juice with a little melted butter and grated breadcrumbs. Bake the cases till the top of the fish is of a golden color.|
REMAINS OF FISH|7|Make a good white sauce, add pepper, salt, and a little nutmeg and juice of a lemon. Add then your remains of fish and a few pickled shrimps. Fill some shells with it and sprinkle over the top a good powdering of grated Gruyère cheese. Lay a pat of butter in the middle of each shell and put them in the oven. When they are colored a good golden brown, serve them decorated with parsley.|[Mme. Lekent.]
GOOD RISSOLES|13|Mince any cold meat, adding to a pound of it one-half pound of fresh lean pork, a chopped shallot and parsley, salt, pepper, a little nutmeg, and bind with an egg, both yolk and white. Form into balls, and dip them in flour, then color them in some butter, and when they are browned pour into the butter a little stock or meat-juice and water|[Mme. Lekens.]
CROQUETTES OF BOILED MEAT|10|People rather look down upon boiled meat as being tasteless, but prepared as I will show you, it will deserve your approval. Mince your boiled meat and put it into a thick white sauce well-spiced with pepper, salt, and nutmeg, and let it remain for two hours. Then prepare your croquettes by rolling the mixture in white of egg and fine breadcrumbs.|[Mlle. A. Demeulemeester.]
CARBONADES DONE WITH BEER|6|Cut the meat into slices that are thin rather than thick. Mince two big onions and fry them till brown; then fry the slices till they are colored on both sides. Pour on them first some beer, then a dash of vinegar, adding thyme, pepper, and salt, and throw in also a slice of crust of bread, which you have spread with mustard. Let this all simmer for three hours.|[Mme. Segur.]
WALLOON ENTRÉE|6|Make some toasted bread, either cut in rounds or in squares, and butter them. Cut some slices of salt beef, or, better still, ham, and put them on top; spread the meat with a good layer of grated cheese, and over that place another piece of buttered toast of corresponding shape. Melt some butter in a small saucepan and fry the rounds till they are golden-brown.|[Mme. E. Maes.]
SCRAPS OF MEAT|9|The scraps of meat should be minced; add to them a little sausage-meat, about a quarter as much, and a slice of white crumb bread that you have dipped in water or milk, and well drained.|[V. Verachtert.]
FRICADELLE|7|To half a pound of minced pork take one and a half pounds of veal, cut an inch, and crumble them up; two raw eggs, pepper and salt. Mix it all well, and place it in the oven for half-an-hour. If you eat this hot, serve it with a gravy sauce.|
CHICORY AND HAM WITH CHEESE SAUCE|11|Cook the chicory in butter till they are done. Then take each one, and roll it in a slice of ham, and put them in a fireproof dish. Then make a very good white sauce of flour and butter and milk, adding|
CROQUETTES OF VEAL|12|Make first of all a very thick white sauce of flour, milk, and butter, not forgetting also salt and pepper; when it is very thick add grated Gruyère cheese, in the proportion of a heaped teaspoonful of this to a breakfast-cupful of sauce. Take it off the fire, and stir in first of all the juice of a lemon.|[Mme. Spinette.]
ENTRÉE (CROQUE-MONSIEUR)|10|Cut out some rounds of crumb of bread, of equal size, with a tin cutter; or, failing that, with a wine glass. Butter all the rounds and sprinkle them with grated cheese—for preference with Gruyère. On half the number of rounds place a bit of ham cut to the same size. Put a lump of butter the weight of egg into a pan, and fry with the rounds in it, till they become golden.|[E. Defouck.]
HOT POT|7|Take two pounds of lean beef and put into cold water|[V. Verachtert.]
HOCHE POT|9|Take one pig's cheek, one pound rump (flank) of beef, one pound rump of veal, two onions, one celery, four leeks, two or three carrots, two or three turnips, according to the size, a few Brussels sprouts, five or six potatoes, according to the number of persons.|[V. Verachtert.]
BOUCHÉES À LA REINE|8|Get some little cases from the pastry-cook of puff paste, which are to be filled with sweetbread cut in dice. It is a good plan to heat the cases before filling them. The filling mixture: Cook the sweetbreads in water with pepper and salt, till done, skin them and cut in dice. Prepare a good bechamel sauce, seasoned with the juice of a lemon, and add to it a few mushrooms that have been fried in butter.|
HOCHE POT OF GHENT|15|Clean two big carrots and cut them into small pieces, the same for two turnips, four leeks, two celeries and a good green cabbage, using the pale leaves. Wash all these vegetables well in running water, two or three times, and put them on the fire in three and one-half pints of water.|[Georges Kerckaert.]
CARBONADE OF FLANDERS|11|Cut your beef into neat slices. Mince some onions for five or six people you would add two bay-leaves, two cloves,|[V. Verachtert.]
HEADLESS SPARROWS|11|Take two pounds of beef, which must be lean and cut in thin slices. Cut your slices of beef in pieces of five inches by three. Put in the middle of each piece a little square of very fat bacon, a sprig of parsley, pepper and salt. Roll up the slices and tie them round with a thread so that the seasoning remains inside. Melt in a pan a lump of butter the size of a very big egg. Let it get brown and then, after rolling the beef in flour, put them in the butter.|[A Belgian at Droitwich.]
MUTTON STEW|21|Take two pounds of mutton, the breast or one of the inferior parts will do as well as a prime piece. Put in an earthenware pan a lump of butter as big as an egg, and let it color. Cut the mutton in pieces and let them color in the butter, adding salt and pepper, a few onions or shallots. When all is colored, add at least a pound of turnips, cut in slices, with about a pint of water.|
HOCHE POT GANTOIS|15|(For eight or nine persons) Take one pound beef, one pound salt pork, and one pound mutton; cut into pieces about three inches by two, let it boil, and skim. Take two or three carrots, one large turnip, one large head of celery, three or four leeks, a good green cabbage, cut in four.|
CHINESE CORKS|10|Make a thick white sauce, and when it has grown a little cold, add the yolk of one egg, and a few drops of lemon-juice. Sprinkle in a slice of stale bread, and enough grated cheese to flavor it and leave it to cool for two hours. Then shape into small pieces like corks, dip them into the beaten whites of your egg.|[Mme. Limpens.]
LIMPENS CHEESE|9|Take a roll and, cutting it in slices, remove the crusts so that a round of crumbs remain. Butter each slice, and cover it well with grated cheese, building up the slices one on the top of the other. Boil a cupful of milk, with pepper, salt, and a little nutmeg.|[Mme. Limpens.]
CHEESE SOUFFLÉ|15|Take two good soup-spoonfuls of flour, and mix it with half a teacupful of milk; melt a lump of butter, the size of a filbert, and add that, then enough grated cheese to your taste, and the yolks of four eggs. Add at the last the whites of the four eggs,|[Mme. Vandervalle.]
CHEESE CROQUETTES|13|Make a thick bechamel sauce, and be sure that you cook it|[Mme. van Marcke de Lunessen.]
CHEESE FONDANTS|13|For twelve fondants make a white sauce with two soupspoons|[Madame Emelie Jones.]
CHEESE SOUFFLÉ|6|Grate half a pound of Gruyère cheese. Mix in a cup of milk a dessert-spoonful of flour; beat four whole eggs, and add first the cheese, and then the flour and milk mixture. Season with pepper and salt, and put all into a mold. Let it cook in a saucepan of boiling water for an hour and a half.|[Madame Emelie Jones.]
POTATOES AND CHEESE|11|Wash some new potatoes, peel them, cut them into very thin round slices. Take a dish which will stand the oven, and be nice enough to go on the table, and put in it a layer of the slices sprinkled with pepper, salt, a little flour, and plenty of grated Gruyère.|[Madame Emelie Jones.]
YORK HAM, SWEETBREADS, MADEIRA SAUCE|8|Heat the ham in a double saucepan (bain marie). Boil the sweetbreads, blanch them and let them fry in some butter. Take flour and butter and melt them to a thick sauce, adding a tumbler of water and Liebig which will turn your sauce brown. Fry half a pound of mushrooms in butter and when brown, add them and the liquor to your sauce with a good glass of madeira or sherry.|[Mme. Vandervalle.]
HAM WITH MADEIRA SAUCE|9|Cook some macaroni or spaghetti, with salt and pepper. Make a brown sauce, using plenty of butter, for this dish requires a great deal of sauce, and add to your "roux" some tomatoes in purée (stewed and run through a sieve), a little meat extract, some fried mushrooms, a few drops of good brandy or madeira to your taste.|[Madame Spinette.]
A DIFFICULT DISH OF EGGS|13|This dish can be managed if one will take fried eggs after all! Put some oil on to heat; if you have not oil use butter, but oil is the best. When the bluish steam rises it is hot enough. Break an egg into a little flat dish, tip up the frying pan at the handle side, and slip the egg into it, then with a wooden spoon turn the egg over on itself.|
COUNTRY EGGS|10|Make a white sauce mixed with onions, such as you would eat in England with leg of mutton, but do not forget a little seasoning of mace. Make a high mold of mashed potatoes, and then scoop it out from the top, leaving the bottom and high sides of the vegetable.|
FRENCH EGGS|13|Put a lump of butter the size of an egg in a fireproof dish, mixing in when it is melted some breadcrumbs, a chopped leek, the inside of three tomatoes, pepper and salt. Let it cook for three or four minutes in the oven, then stir in the yolks of two eggs, and let it make a custard. Then break on the top of this custard as many eggs as you wish,|
ŒUFS CELESTES|15|Take the stalks and white of the celery and cut in dice|
PETITES CAISSES A LA FURNES|13|Cook some pork in water with a good many peppercorns. When it is cold cut it up into small dice; add to it about a quarter of the amount of ham, and the whites of two hard-boiled eggs. Moisten the mixture with a good white sauce made with cream.|
FLEMISH CARROTS|8|Take young carrots, wash them, and trim them as you would an infant, then simmer them till tender in with pepper and salt. When cooked, draw them to the side of the fire and pour in some cream to make a good sauce.|
AUBERGINE OR EGG PLANT|17|This purple fruit is, like the tomato, always used as a|
SOUFFLÉ AU FROMAGE|5|Wash the fruit, cut them lengthways, and remove the inside. Fill each half with a mixture made of beaten egg, grated cheese, and some fine breadcrumbs, and a dust of mustard. Put the halves to bake for a quarter of an hour, or till the soufflé mixture has risen.|
POTATO CROQUETTES|12|Cook your potatoes, rub them through the sieve, add pepper and salt, two or three eggs|[Madame Emelie Jones.]
PUREE OF CHESTNUTS|6|Make a little slit in each chestnut, boil them till tender, then put them in another pan with cold water in it and replace them on the fire. Peel them one by one as you take them out, and rub them through a sieve, pounding them first to make it easier, add salt, a good lump of butter and a little milk to make a nice purée.|
HORS D'OEUVRES|5|The attractive "savory" of English dinner tables finds its counterpart in egg and fish dishes served cold at the beginning of a meal, and therefore what we should call hors d'oeuvres.|
POTATO DICE|10|Boil your potatoes and let them be of the firm, soapy kind, not the mealy. When they are cold cut them into dice, and|
ANCHOVIES|5|Fillets of these, put in a lattice work across mashed potato look very nice. Be sure you use good anchovies preserved in salt, and well washed and soaked to take away the greater part of the saltness; or, if you can make some toast butter it when cold, cut it into thin strips, and lay a fillet in the center.|
ANCHOVY SANDWICHES|5|Cut some bread and butter, very thin, and in fingers. Chop some water-cress, lay it on a finger, sprinkle a little Tarragon vinegar and water (equal quantities) over it, and then lay on a fillet of anchovy, cover with more cress and a finger of bread and butter.|
ANCHOVY ROUNDS|2|Make some toast, cut it in rounds, butter it when cold. Curl an anchovy round a stoned olive, and put it on the toast. Make a little border of yolk of egg boiled and chopped.|
ANCHOVY BISCUITS|3|Made as you would make cheese biscuits, but using anchovy sauce instead to flavor them. If you make the pastry thin you can put some lettuce between two biscuits and press together with a little butter spread inside.|
ANCHOVY PATTIES|21|Make some pastry and roll out a coffee cup and turning it upside down stamp out some rounds. Turn the cup the right way again, and put it on a round. Then you will see an edge of paste protruding all round.|
STORED SPRATS|11|When sprats are cheap and in good quantity, while in England|
CUCUMBER À LA LAEKEN|20|Take the cucumbers and cut into pieces two inches long, then peel|
HERRING AND MAYONNAISE|5|Take some salt herring, a half for each person, and soak them for a day in water. Skin them, cut them open lengthwise, take out the backbone, and put them to soak in vinegar. Then before serving them let them lie for a few minutes in milk, and putting them on a dish pour over them a good mayonnaise sauce.|
SWEET DRINKS AND CORDIALS, ORGEAT|13|Pound a pound of sweet almonds and one ounce|
HAWTHORN CORDIAL|10|When the hawthorn is in full bloom, pick a basketful of the blooms. Take them home, and put the white petals into a large glass bottle, taking care that you put in no leaves or stalks. When the bottle is filled to the top do not press it down, but|
DUTCH NOYEAU|13|Peel the rinds of five large lemons, or of six small ones, then throw|
LAVENDER WATER|10|Take a large bottle, and put in it twelve ounces of the best spirits of wine, one essence of ambergris, twopennyworth of musk, and three drachms oil of lavender.|
HOT BURGUNDY|3|Take half a pint of good Burgundy wine, put it to boil with two cloves, and a dust of mixed spice, sweeten to taste with some powdered sugar. If you like add a quarter of the quantity of water to the wine before boiling.|
CREME DE POISSON A LA ROI ALBERT|16|Take a large fish and pass the flesh through a|
FISH AND CUSTARD|6|Boil up the trimmings of your fish with milk, pepper and salt. Strain it and add the yolks of eggs till you get a good custard. Pour the custard into a mold, and lay in it your fish, which must already be parboiled. If you have cold fish, flake it, and mix it with the custard. Put the mold in a double saucepan. Steam it for three quarters of an hour.|
HAKE AND POTATOES|9|Hake, which is not one of the most delicate fish, can be made excellent if stewed in the following sauce: A quart of milk to which you have added a dessertspoonful of any of the good English sauces; thicken it with a knob of butter rolled in flour, which stir in till all is smooth. When it boils take off the fire, and put in your pieces of hake.|
VERY NICE SKATE|18|Take skate, or indeed any fish that rather into fillets, dry them well, and sprinkle on each fillet, pepper,|
TO KEEP SPRATS|14|A large quantity of these fish can be bought and kept for some weeks by this method. Put in warm equal quantities of vinegar and water, what you think sufficient to cover your sprats, allowing for wastage; and stir in for every|
TO KEEP MACKEREL FOR A WEEK|13|Mackerel can be had at certain times|
A BROWN DISH OF FISH|10|Take your fish, which should be herring or mackerel, relieve it of the bones, skin and fins, which you must put to boil for three-quarters of an hour in water, with pepper and salt. After that time strain off the liquor, and add to it enough browning to color it well.|
BAKED HADDOCKS|11|Take two haddocks and soak them; put them into a pan|
FILLETED SOLES AU FROMAGE|9|Boil the filleted soles in water. Make a sauce with butter. One spoonful of flour—milk, pepper and salt, powdered cheese (Cheddar). Boil it, adding some washed and chopped mushrooms and a little cream.|[Mdlle. Spreakers.]
FILLETED FISH WITH WHITE SAUCE AND TOMATOES|12|Boil the fillets in a very little water, with a glass of white wine. Let this|[Madame Vandervalle.]
THE MILLER'S COD|5|(Cabillaud meunier) Cut your cod in slices, and roll them in flour. Put them to fry in a good piece of butter, adding chopped parsley, pepper and salt, and the juice of one lemon. This is very good, if served in the dish that it is cooked in.|
DUTCH HERRINGS|6|(A cold dish) Take some Dutch, or some salted herrings, and remove the skin, backbones, etc. Lay the fish in milk for at least twenty-four hours to get the salt out. Make a mayonnaise sauce, adding to it the roe from the herrings, in small pieces; wipe and drain the fish, and pour over them the sauce.|
REMAINS OF COD|10|Take your fish, and remove all bones and skin. Put some butter to brown in a saucepan, and when it is colored, add the cod, sprinkling in pepper and salt and a good thickening of grated breadcrumbs. Let this all cook|
HORS D'OEUVRE|9|(Herring and Mayonnaise) Take some salt herrings, one for each person, and soak them for a day in water.|[Mme. Delhaye.]
CARROT SOUP|14|Wash and scrape a pound of carrots, slice them|
SORREL SOUP|8|Take a quart of bouillon or of meat extract and water. Fry in butter a carrot, a turnip, an onion, a small cabbage, all washed and chopped, and add half a teaspoonful of castor sugar. Put|
OSTEND SOUP|7|There are many varieties of this soup to be met with in the different hotels, but it is a white soup, made of fish pieces and trimmings, strained, returned to the pot, and with plenty of|
ANOTHER SORREL SOUP|4|Take a tablespoonful of breadcrumbs, moisten them in milk in a pan, then add as much water as you require.|
HADDOCK PIE|2|Take some haddock, and cook them in water|
ARTICHOKES A LA VEDETTE|3|When they are in season, wash and cook them|
BURGUNDY ONIONS|3|Clean the onions before you wish to serve, add a glass of claret|
VEGETABLE SALADS|3|Sometimes one has a few leeks, a half cauliflower, a handful each of peas and beans. Instead of currying them cook all|
TOMATOES A LA SIR EDWARD GREY HOMMAGE|3|Take some fine firm tomatoes, not very ripe. Turn them with the stalk side up, and slice off the top with a sharp knife|
STEWED CARROTS|3|Take some good sized carrots, and after washing them well and cutting off the green tuft, cut each across about two and a|
TO COOK ASPARAGUS|3|One should not let the tips of this vegetable touch the water. Take your bundle, dip the stalks in warm water to remove any|
TOMATOES IN HASTE|3|Butter a pie dish and open a tin of tomatoes|
KIDNEYS AND LETTUCE|3|Boil the lettuces in salted water; take them out|
TOMATO RICE|3|Put the rice in a saucepan with tomatoes|
RICE WITH EGGS|3|Put on the purée of carrots, and taking it off serve,|
BROAD BEANS IN SAUCE|3|Take your shelled beans, very young and tender. Throw them into boiling water for a minute, then pour the water away.|
OMELETTE OF PEAS|3|Beat up three eggs, to which add one tablespoonful of grated|
BRUSSELS ARTICHOKES|3|Wash well some globe artichokes and boil them in salted|
BRUSSELS CARROTS|3|Cook them and serve them with a little parsley.|`
  .trim()
  .split('\n')

const filler =
  'Let it simmer for half an hour and stir it now and then with a wooden spoon. Add pepper and salt, a pinch of nutmeg and a lump of butter the size of a walnut. When it is tender take it off the fire and pass it through the sieve. If the sauce is too thick put in a little milk or stock, and serve it very hot in a flat dish with chopped parsley on the top. Put in the oven for a quarter of an hour till it is of a good brown color. Take care that it does not stick to the bottom of the pan, and before serving add the juice of half a lemon. '

function wrap(text: string, count: number): string[] {
  const out: string[] = []
  let line = ''
  for (const word of text.split(' ')) {
    if (line && line.length + word.length + 1 > 63) {
      out.push(line)
      line = word
      if (out.length >= count) return out
    } else line = line ? `${line} ${word}` : word
  }
  out.push(line)
  return out
}

function typeset(source: string, index: number): Recipe {
  const col = index % 14
  const top = 327.3 + Math.floor(index / 14) * PITCH_Y
  const [title, depth, opening, sign] = source.split('|')
  const end = top + 9.7 + (Number(depth) + 0.4) * LEADING
  const words = adverbs.filter((a) => Math.floor((a.x - 850) / PITCH_X) === col && a.y > top + 20)
  const texts = wrap(`${opening} ${filler}${filler}`, 30)
  const lines: Line[] = []
  let y = top + 9.7
  let gap = 0
  while (y <= end && lines.length < 30) {
    const hit = words.find((a) => a.y - 16 < y && a.y + 1 > y)
    if (hit) {
      const next = hit.y + 5
      gap += next - y
      y = next
      continue
    }
    const last = y + LEADING > end
    lines.push({ text: last && sign ? sign : texts[lines.length], gap, sign: !!(last && sign) })
    gap = 0
    y += LEADING
  }
  return { title, lines }
}

const recipes = book.map(typeset)

const menus = [
  { label: 'Safari', w: 81 }, { label: 'Fichier', w: 88 }, { label: 'Édition', w: 92 },
  { label: 'Présentation', w: 164 }, { label: 'Historique', w: 137 }, { label: 'Signets', w: 96 },
  { label: 'Développement', w: 210 }, { label: 'Fenêtre', w: 99 }, { label: 'Aide', w: 59 },
]
const bookmarks = [
  { label: 'Apple', w: 65 }, { label: 'iCloud', w: 72 }, { label: 'Facebook', w: 106 },
  { label: 'Twitter', w: 82 }, { label: 'Wikipedia', w: 110 }, { label: 'Yahoo', w: 70 },
  { label: 'Informations', w: 147, menu: true }, { label: 'Divers', w: 73, menu: true },
]
const tabs = [
  { label: 'HTML2print', w: 134, size: 393 }, { label: 'The Belgian Cook–book,...', w: 295, size: 393 },
  { label: 'Index of /fonts/coelacanth', w: 297, size: 391 }, { label: 'lucas', w: 58, size: 392 },
  { label: 'RegExr: Learn, Build, & T...', w: 297, size: 391 }, { label: 'Table de caractères Uni...', w: 287, size: 392 },
  { label: 'Sans titre', w: 109, size: 377 },
]
const tools = [
  { label: 'PREVIEW', w: 166, t: 125 }, { label: 'DEBUG', w: 133, t: 95 }, { label: 'SPREAD', w: 148, t: 110 },
  { label: 'HI-RES', w: 130, t: 93 }, { label: 'ZOOM', w: 212, t: 80 }, { label: 'GO TO', w: 124, t: 86 },
]
</script>

<template>
  <div class="screen">
    <header class="menubar">
      <svg class="grain" width="2880" height="43">
        <filter id="sparkle" x="0" y="0" width="100%" height="100%">
          <feTurbulence type="fractalNoise" baseFrequency="0.06 0.03" numOctaves="2" seed="8" />
          <feColorMatrix values="0 0 0 0 1  0 0 0 0 1  0 0 0 0 1  4 0 0 0 -1.9" />
        </filter>
        <rect width="2880" height="43" filter="url(#sparkle)" />
      </svg>
      <svg class="apple" width="32" height="38" viewBox="0 0 32 38">
        <defs><linearGradient id="ap" x1="0" y1="0" x2="0" y2="1"><stop offset="0" stop-color="#111" /><stop offset=".55" stop-color="#333" /><stop offset="1" stop-color="#777" /></linearGradient></defs>
        <path fill="url(#ap)" d="M21 1c.4 4-3 8-7 8 0-4 3-7 7-8zM16 12c2 0 4-2 8-2 3 0 5 1.500 6 3.200-6 3.500-5 11.500 1 14C29.500 32 26 37 23 37c-2.500 0-3.500-1.500-6.500-1.500S12 37 10 37C6 37 1 29 1 21.500 1 14 5.500 10 10 10c2.500 0 4.500 2 6 2z" />
      </svg>
      <nav class="menus">
        <span v-for="(m, i) in menus" :key="m.label" :class="['slot', { bold: i === 0 }]" :style="{ width: m.w + 'px' }"><span v-fit="m.w">{{ m.label }}</span></span>
      </nav>
      <svg class="status" width="890" height="43" viewBox="1990 0 890 43">
        <g fill="#858585"><path d="M2001 5l8 5-7 6-8-5zM2019 5l8 6-8 5-7-6zM2001 27l-7-5 8-6 7 6zM2019 16l8 6-8 5-7-5zM2002 29l8-5 6 5-7 7z" /></g>
        <circle cx="2022" cy="27" r="9" fill="#111" /><path d="M2019 23.500l6 7M2025 23.500l-6 7" stroke="#fff" stroke-width="2.200" />
        <path d="M2054 6h29v26h-29z" fill="#1c1c1c" /><path d="M2056 32l9-25h7l9 25h-7l-2-7h-5l2 7z" fill="#c8c8c8" /><path d="M2066 10h5l7 20h-3l-6-16-6 16h-4z" fill="#333" />
        <text x="2092" y="32" font-size="28">9</text>
        <g fill="none" stroke="#858585" stroke-width="3"><path d="M2139 19a14 14 0 1 1 4 11" /><path d="M2153 12v10l6 4" stroke-width="2.500" /></g><path d="M2133 18h11l-5 8z" fill="#858585" />
        <path d="M2205 13l13 14-7 7V7l7 7-13 13" fill="none" stroke="#858585" stroke-width="2.200" />
        <g fill="none" stroke="#111" stroke-width="4"><path d="M2252 17a29 29 0 0 1 40 0" /><path d="M2258 23a20 20 0 0 1 28 0" /><path d="M2264 29a11 11 0 0 1 16 0" /></g><path d="M2267 33l5-2 5 2-5 5z" />
        <path d="M2314 17h5l10-7v25l-10-7h-5z" fill="#111" />
        <path d="M2376 11h11v22h-11z" fill="#1756b0" /><path d="M2387 11h11v22h-11z" fill="#fff" /><path d="M2398 11h10v22h-10z" fill="#ee4138" />
        <text x="2433" y="30" font-size="24" textLength="53" lengthAdjust="spacingAndGlyphs">32 %</text>
        <rect x="2497" y="11" width="36" height="21" rx="3" fill="none" stroke="#111" stroke-width="3" /><path d="M2501 15h6v13h-6zM2535 18h3v8h-3z" fill="#111" />
        <text x="2563" y="32" font-size="27" textLength="138" lengthAdjust="spacingAndGlyphs">jeu. 16:56</text>
        <circle cx="2751" cy="18" r="10.500" fill="none" stroke="#111" stroke-width="3.500" /><path d="M2758 25l8 8" stroke="#111" stroke-width="5" />
        <path d="M2799 8h5v6h-5zM2808 8h32v6h-32zM2799 18h5v6h-5zM2808 18h28v6h-28zM2799 28h5v6h-5zM2808 28h28v6h-28z" fill="#111" />
      </svg>
    </header>

    <section class="window">
      <div class="titlebar">
        <div class="lights"><i class="red" /><i class="amber" /><i class="green" /></div>
        <h1><span v-fit="147">HTML2print</span></h1>
        <svg class="expand" width="28" height="28" viewBox="0 0 28 28"><path d="M15 0h13v13l-4-4-6 6-4-5 6-6zM0 15l4 4 6-6 4 5-6 6 5 4H0z" fill="#909090" /></svg>
      </div>

      <div class="toolbar">
        <div class="btn nav">
          <svg width="103" height="40" viewBox="0 0 103 40"><path d="M18 20l17-9v18z" fill="#666" /><path d="M86 20l-17-9v18z" fill="#8d8d8d" /><path d="M52 4v32" stroke="#999" stroke-width="2" /></svg>
        </div>
        <div class="btn share">
          <svg width="34" height="28" viewBox="0 0 34 28"><path d="M14 4H3v21h25v-7" fill="none" stroke="#8b8b8b" stroke-width="3.500" /><path d="M9 20c0-9 5-13 12-13V1l12 10-12 9v-6c-6 0-9 1-12 6z" fill="#555" /></svg>
        </div>
        <div class="btn hand">
          <svg width="32" height="32" viewBox="0 0 32 32"><path d="M10 1h12l8 9v12l-8 9H10l-8-9V10z" fill="#666" /><path d="M9 17l2 7 4 4h5l3-5V9h-2v7l-1-10h-2v9L17 4h-2v11L13 6h-2l1 13-2-3z" fill="#ddd" /></svg>
        </div>
        <div class="btn plus"><svg width="22" height="22" viewBox="0 0 22 22"><path d="M11 1v20M1 11h20" stroke="#5c5c5c" stroke-width="3.500" /></svg></div>
        <div class="url">
          <svg width="28" height="28" viewBox="0 0 28 28"><defs><radialGradient id="gl" cx=".45" cy=".7"><stop offset="0" stop-color="#a6dbff" /><stop offset=".6" stop-color="#4a90de" /><stop offset="1" stop-color="#1e57a8" /></radialGradient></defs><circle cx="14" cy="14" r="13.500" fill="url(#gl)" /><path d="M8 3l6-2 5 2-1 4-5 3-1 4-5-3-2-5zM11 14l5 1 6 5-3 6-4 1-1-6z" fill="#e6f4ff" /></svg>
          <span class="address"><span v-fit="171">localhost:8000</span></span>
          <svg class="reload" width="22" height="24" viewBox="0 0 22 24"><path d="M13 5.500A8 8 0 1 0 19 13" fill="none" stroke="#666" stroke-width="3.200" /><path d="M11 0l9 5.500-9 5z" fill="#666" /></svg>
        </div>
        <div class="btn reader"><span v-fit="92">Lecteur</span></div>
        <div class="btn down"><svg width="30" height="30" viewBox="0 0 30 30"><circle cx="15" cy="15" r="14" fill="#636363" /><path d="M12 6h6v9h5l-8 9-8-9h5z" fill="#eee" /></svg></div>
      </div>

      <div class="bookmarks">
        <svg class="book" width="36" height="26" viewBox="0 0 36 26"><path d="M18 4c-4-4-12-4-17 0v21c5-4 13-4 17 0 4-4 12-4 17 0V4C30 0 22 0 18 4zv20" fill="none" stroke="#4a4a4a" stroke-width="2.200" /></svg>
        <svg class="grid" width="31" height="24" viewBox="0 0 31 24"><g fill="#505050"><template v-for="r in 3" :key="r"><rect v-for="c in 4" :key="c" :x="(c - 1) * 8" :y="(r - 1) * 8.500" width="6" height="6" /></template></g></svg>
        <span v-for="b in bookmarks" :key="b.label" class="mark"><span class="slot" :style="{ width: b.w + 'px' }"><span v-fit="b.w">{{ b.label }}</span></span><i v-if="b.menu" /></span>
      </div>

      <div class="tabs">
        <div v-for="(t, i) in tabs" :key="t.label" :class="['tab', { active: i === 0 }]" :style="{ width: t.size + 'px' }"><span v-fit="t.w">{{ t.label }}</span></div>
        <div class="tab add"><svg width="16" height="16" viewBox="0 0 16 16"><path d="M8 0v16M0 8h16" stroke="#4e4e4e" stroke-width="3" /></svg></div>
        <div class="tab all"><svg width="32" height="17" viewBox="0 0 32 17"><path d="M1.500 0v17M30.500 0v17" stroke="#555" stroke-width="2" /><path d="M5 0h22v17H5z" fill="#626262" /></svg></div>
      </div>

      <main class="viewport">
        <div class="paper" />
        <div class="spread">
          <div class="recipes">
            <article v-for="(r, i) in recipes" :key="i">
              <h2>{{ r.title }}</h2>
              <p v-for="(l, k) in r.lines" :key="k" :class="{ sign: l.sign }" :style="{ marginTop: l.gap + 'px' }">{{ l.text }}</p>
            </article>
          </div>
          <span v-for="(a, i) in adverbs" :key="i" class="adverb" :style="{ left: a.x + 'px', top: a.y - 232 + 'px', letterSpacing: a.track + 'px' }">{{ a.word }}</span>
        </div>
        <div class="tools">
          <button v-for="(t, i) in tools" :key="t.label" :class="{ on: i === 0 }" :style="{ width: t.w + 'px' }"><span v-fit="t.t">{{ t.label }}</span></button>
        </div>
      </main>
    </section>
  </div>
</template>

<style>
body { margin: 0; background: #444; }
</style>

<style scoped>
* { box-sizing: border-box; }
.screen { width: 2880px; height: 1800px; overflow: hidden; background: linear-gradient(#222 0 1780px, #383838 1790px, #5a5a5a 1800px); font-family: 'Noto Sans', 'Open Sans', sans-serif; color: #000; }
.menubar { position: relative; height: 44px; display: flex; align-items: flex-start; background: linear-gradient(#d2d2d2, #959595); border-bottom: 2px solid #000; overflow: hidden; }
.grain { position: absolute; inset: 0; opacity: .5; -webkit-mask-image: linear-gradient(#000 40%, #0006); mask-image: linear-gradient(#000 40%, #0006); }
.apple { position: relative; margin: 2px 0 0 39px; flex: none; }
.menus { position: relative; display: flex; gap: 39px; margin-left: 37px; font-size: 27px; line-height: 43px; text-shadow: 0 2px 1px #ffffff80; }
.slot { display: inline-block; white-space: nowrap; }
.bold { font-weight: 700; }
.status { position: relative; margin-left: auto; flex: none; }

.window { margin-left: 2px; height: 1747px; display: flex; flex-direction: column; border-radius: 10px 10px 12px 12px; overflow: hidden; background: #b0b0b0; }
.titlebar { position: relative; height: 48px; flex: none; background: linear-gradient(#ececec, #d2d2d2); display: flex; align-items: center; justify-content: space-between; padding: 0 8px 0 16px; }
.lights { display: flex; gap: 16px; margin-top: -4px; }
.lights i { width: 24px; height: 24px; border-radius: 50%; border: 1.500px solid #00000070; box-shadow: 0 2px 1px #fff9; }
.red { background: radial-gradient(ellipse 6px 4px at 50% 20%, #fff, transparent), radial-gradient(circle at 50% 90%, #ffb3b0, #ee4743 50%, #a92525); }
.amber { background: radial-gradient(ellipse 6px 4px at 50% 20%, #fff, transparent), radial-gradient(circle at 50% 90%, #fff2a0, #eda54b 50%, #a8681c); }
.green { background: radial-gradient(ellipse 6px 4px at 50% 20%, #fff, transparent), radial-gradient(circle at 50% 90%, #def5bd, #7cc25d 50%, #3f7a2c); }
h1 { margin: 0; position: absolute; left: 0; right: 3px; top: 0; text-align: center; font-size: 26px; font-weight: 400; line-height: 44px; color: #333; }
.expand { margin-top: -2px; }

.toolbar { height: 45px; flex: none; display: flex; background: linear-gradient(#d2d2d2, #b2b2b2); padding: 0 15px 2px 16px; border-bottom: 2px solid #c6c6c6; }
.btn { height: 43px; border: 2px solid #7b7b7b; border-radius: 9px; background: linear-gradient(#f3f3f3, #bdbdbd); display: flex; align-items: center; justify-content: center; flex: none; }
.nav { width: 106px; margin-right: 17px; }
.share { width: 55px; margin-right: 17px; }
.hand { width: 55px; margin-right: 17px; }
.plus { width: 59px; border-radius: 9px 0 0 9px; }
.url { flex: 1; height: 43px; border: solid #858585; border-width: 2px 0; background: linear-gradient(#dcdcdc, #f8f8f8 7px, #fff); display: flex; align-items: center; padding: 0 14px 0 10px; }
.address { margin-left: 12px; font-size: 25px; white-space: nowrap; }
.reload { margin-left: auto; }
.reader { width: 129px; border-radius: 0 9px 9px 0; margin-right: 19px; font-size: 26px; color: #999; text-shadow: 0 2px #eee; }
.down { width: 55px; }

.bookmarks { height: 49px; flex: none; display: flex; align-items: center; padding: 0 0 3px 21px; background: #b0b0b0; font-size: 22px; font-weight: 700; color: #3d3d3d; text-shadow: 0 2px #ccc; }
.grid { margin: 0 28px 0 27px; }
.mark { margin-right: 32.200px; display: flex; align-items: center; }
.mark i { margin-left: 10px; border: 7px solid transparent; border-top: 10px solid #505050; border-bottom: 0; margin-top: -3px; }

.tabs { height: 46px; flex: none; display: flex; padding-left: 19px; background: linear-gradient(#929292, #a2a2a2 12px); border: solid #6c6c6c; border-width: 2px 0; }
.tab { flex: none; height: 42px; display: flex; align-items: center; justify-content: center; padding: 0 4px 4px 0; border-right: 2px solid #6f6f6f; border-radius: 0 6px 8px 0; box-shadow: 2px 0 #aeaeae60; font-size: 22px; font-weight: 700; color: #3d3d3d; text-shadow: 0 2px #c4c4c4; white-space: nowrap; }
.active { margin-top: -2px; height: 43px; padding-bottom: 1px; background: #b0b0b0; border-left: 2px solid #6f6f6f; border-radius: 0 0 8px 8px; }
.add { width: 67px; padding: 0 2px 2px 0; }
.all { flex: 1; border-right: 0; padding: 0 0 2px; }

.viewport { position: relative; flex: 1; background: #fff; overflow: hidden; margin-left: -2px; }
.paper { position: absolute; left: 812px; top: 48px; width: 1872px; height: 1600px; border: 1.500px solid #c9c9c9; box-shadow: 1px 0 2px #ddd; }
.spread { position: relative; width: 2706px; height: 1560px; overflow: hidden; font-family: 'Liberation Serif', serif; color: #0014a0; }
.recipes { width: 1790px; margin-left: 850px; padding-top: 92px; display: grid; grid-template-columns: repeat(14, 127.500px); grid-auto-rows: 90.500px; }
article { white-space: nowrap; font-size: 4.950px; line-height: 6.530px; min-width: 0; color: #0c1c9c; -webkit-text-stroke: .100px #0c1c9c; }
h2 { margin: 0 0 3.200px; font-size: 4.950px; font-weight: 400; line-height: 6.500px; }
p { margin: 0; height: 6.530px; }
.sign { font-style: italic; }
.adverb { position: absolute; font-size: 43px; line-height: 50px; margin: -38.500px 0 0 1px; -webkit-text-stroke: .800px #0014a0; white-space: nowrap; }

.tools { position: absolute; left: 1896px; top: 1480px; display: flex; align-items: center; }
.tools button { height: 52px; margin: 0 0 0 8px; padding: 0; border: 0; background: #000; color: #fff; font: 24px 'Liberation Sans', Arial, sans-serif; white-space: nowrap; }
.tools button:nth-child(1) { margin: 0; }
.tools .on { height: 56px; background: #fff; color: #000; border: 2px solid #000; }
.tools button:nth-child(2) { margin-left: 7px; }
.tools button:nth-child(4), .tools button:nth-child(6) { margin-left: 10px; }
</style>
